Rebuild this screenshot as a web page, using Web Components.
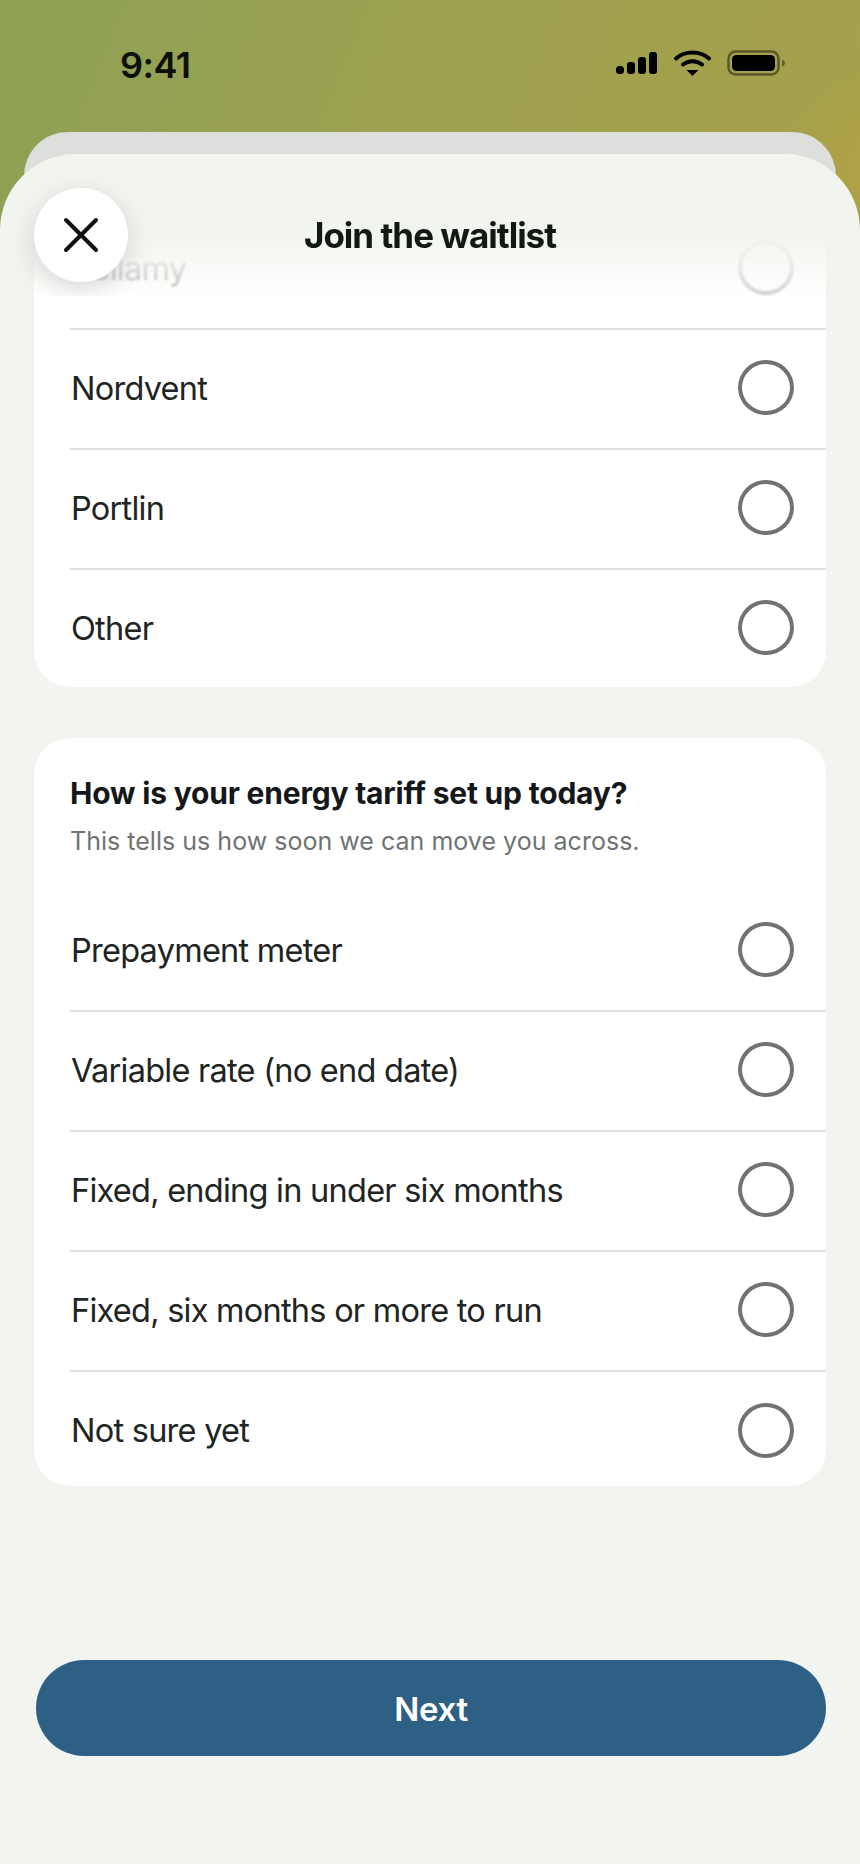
<!DOCTYPE html>
<html lang="en"><head><meta charset="utf-8"><title>Join the waitlist</title>
<style>
html,body{margin:0;padding:0;width:860px;height:1864px;overflow:hidden}
body{font-family:Inter,"Liberation Sans",sans-serif;background:#f1f4ef}
</style></head><body>
<waitlist-screen>
<status-bar slot="status"></status-bar>
<sheet-header slot="header" title="Join the waitlist"></sheet-header>
<question-card style="margin-top:-121px">
  <option-row>Bellamy</option-row><option-row>Nordvent</option-row><option-row>Portlin</option-row><option-row tight>Other</option-row>
</question-card>
<question-card heading="How is your energy tariff set up today?" sub="This tells us how soon we can move you across.">
  <option-row>Prepayment meter</option-row><option-row>Variable rate (no end date)</option-row><option-row>Fixed, ending in under six months</option-row><option-row>Fixed, six months or more to run</option-row><option-row last>Not sure yet</option-row>
</question-card>
<primary-button slot="footer">Next</primary-button>
</waitlist-screen>
<script>
function def(name,html,init){customElements.define(name,class extends HTMLElement{constructor(){super();this.attachShadow({mode:'open'}).innerHTML=html;}connectedCallback(){init&&init(this)}});}
def('waitlist-screen',`<style>
:host{display:block;width:860px;height:1864px;position:relative;overflow:hidden;background:radial-gradient(circle at 885px 165px,#b2a244 0,rgba(178,162,68,0) 105px) no-repeat,linear-gradient(112deg,#8ea155 0%,#9ea24f 50%,#a6a04b 100%) 0 0/100% 260px no-repeat,#f1f4ef}
.back{position:absolute;left:24px;right:24px;top:132px;height:200px;background:#dcdfdc;border-radius:44px 44px 0 0}
.sheet{position:absolute;left:0;right:0;top:154px;bottom:0;background:#f1f4ef;border-radius:76px 76px 0 0;overflow:hidden;display:flex;flex-direction:column}
.scroll{padding:175px 34px 0;display:flex;flex-direction:column;gap:51px}
.foot{position:absolute;left:36px;right:34px;bottom:108px}
</style><slot name="status"></slot><div class="back"></div><div class="sheet"><div class="scroll"><slot></slot></div><slot name="header"></slot><div class="foot"><slot name="footer"></slot></div></div>`);
def('status-bar',`<style>
:host{display:flex;position:absolute;z-index:2;left:0;right:0;top:0;height:132px;box-sizing:border-box;padding:46px 75px 0 120px;justify-content:space-between;align-items:flex-start}
.t{font:600 36px/38px Inter,sans-serif;color:#0c0f0a;letter-spacing:-.5px}
.i{display:flex;align-items:center;gap:16px;margin-top:4px}svg{display:block}
</style><div class="t">9:41</div><div class="i">
<svg width="42" height="22" viewBox="0 0 42 22"><rect x="0" y="14" width="8" height="8" rx="3.500"/><rect x="11" y="10" width="8" height="12" rx="3"/><rect x="22" y="5" width="8" height="17" rx="3"/><rect x="33" y="0" width="8" height="22" rx="3"/></svg>
<svg width="37" height="26" viewBox="0 0 37 26" fill="none" stroke="#000" stroke-width="4" stroke-linecap="round"><path d="M2 8.500C11 .5 26 .5 35 8.500"/><path d="M9 14.500c5.500-4.500 13.500-4.500 19 0"/><path d="M12.500 20h12L18.500 26z" fill="#000" stroke="none"/></svg>
<svg width="58" height="26" viewBox="0 0 58 26"><rect x="1.500" y="1.500" width="50" height="23" rx="7" fill="none" stroke="#000" stroke-opacity=".45" stroke-width="2.500"/><rect x="5" y="5" width="43" height="16" rx="4.500"/><path d="M55 9.500c2 .5 3 2 3 3.500s-1 3-3 3.500z" fill="#000" fill-opacity=".4"/></svg>
</div>`);
def('sheet-header',`<style>
:host{display:block;position:absolute;left:0;right:0;top:0;height:142px;z-index:1;overflow:hidden}
.bg{position:absolute;inset:0 34px;-webkit-backdrop-filter:blur(1px);backdrop-filter:blur(1px);background:linear-gradient(#f1f4ef 0,#f1f4ef 56%,rgba(246,248,244,.93) 74%,rgba(255,255,255,.68) 100%)}
.x{position:absolute;left:34px;top:34px;width:94px;height:94px;border-radius:50%;background:#fff;box-shadow:0 8px 28px rgba(0,0,0,.14);display:flex;align-items:center;justify-content:center}
h1{position:absolute;left:0;right:0;top:59px;margin:0;text-align:center;font:700 35px/44px Inter,sans-serif;letter-spacing:-1px;color:#141815}
</style><div class="bg"></div><h1></h1><div class="x"><svg width="36" height="36" viewBox="0 0 36 36" fill="none" stroke="#111" stroke-width="4" stroke-linecap="round"><path d="M3 3 33 33M33 3 3 33"/></svg></div>`,el=>{el.shadowRoot.querySelector('h1').textContent=el.getAttribute('title')});
def('question-card',`<style>
:host{display:block;background:#fff;border-radius:36px;padding-left:36px;overflow:hidden}
.h{padding:36px 0 30px 0}
h2{margin:0;font:700 30px/38px Inter,sans-serif;letter-spacing:-.2px;color:#15181a}
p{margin:10px 0 0;font:400 25px/38px Inter,sans-serif;letter-spacing:.02px;color:#6f7472}
</style><div class="h"><h2></h2><p></p></div><slot></slot>`,el=>{const h=el.getAttribute('heading');if(h){el.shadowRoot.querySelector('h2').textContent=h;el.shadowRoot.querySelector('p').textContent=el.getAttribute('sub')}else el.shadowRoot.querySelector('.h').remove()});
def('option-row',`<style>
:host{display:flex;align-items:center;justify-content:space-between;height:120px;box-sizing:border-box;padding-right:32px;border-top:2px solid #dfe1df;font:400 32.500px/40px Inter,sans-serif;color:#202422;letter-spacing:-.75px}
:host(:first-child){border-top-color:transparent}
:host([last]){height:116px}
:host([tight]){height:119px}
span{margin-left:1px}
i{display:block;width:56px;height:55px;box-sizing:border-box;border:4px solid #727272;border-radius:50%;margin-top:-2.500px}
:host([last]) i{margin-top:3px}
:host([last]) span{margin-top:3px}
:host([tight]) i{margin-top:-1.500px}
</style><span><slot></slot></span><i></i>`);
def('primary-button',`<style>
:host{display:flex;height:96px;box-sizing:border-box;padding-top:2px;border-radius:48px;background:#2e5f85;color:#fff;align-items:center;justify-content:center;font:600 33px/40px Inter,sans-serif;letter-spacing:-.3px}
</style><slot></slot>`);
</script>
</body></html>
